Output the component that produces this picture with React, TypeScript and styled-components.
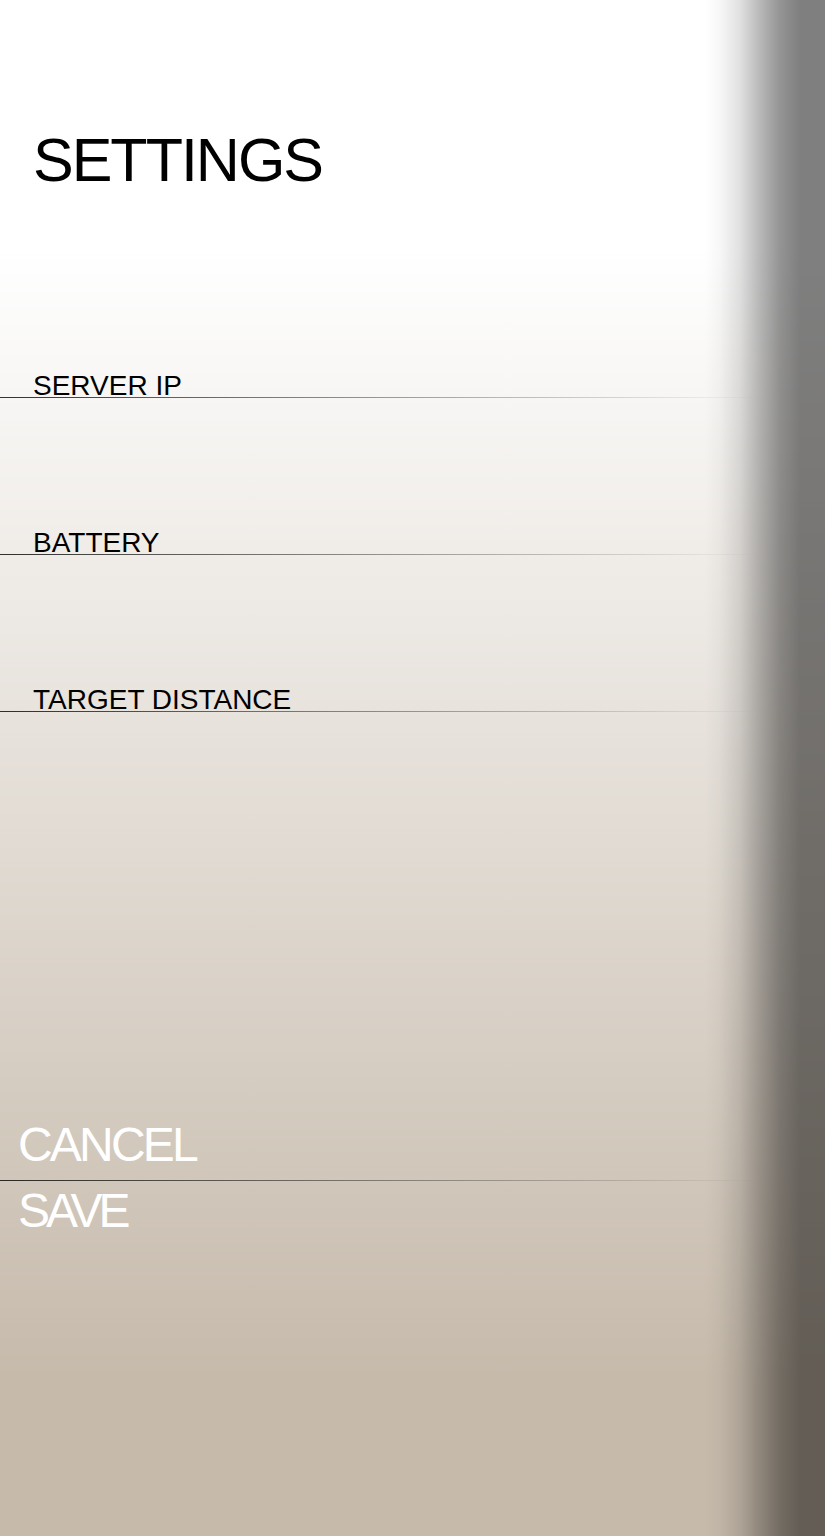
import React from "react";
import styled, { createGlobalStyle } from "styled-components";

const GlobalStyle = createGlobalStyle`
  html, body {
    margin: 0;
    padding: 0;
  }
  body {
    font-family: "Liberation Sans", Arial, Helvetica, sans-serif;
  }
`;

const Page = styled.div`
  position: relative;
  min-height: 1536px;
  overflow: hidden;
  background: linear-gradient(
    to bottom,
    #ffffff 0px,
    #ffffff 250px,
    #c6baab 1380px,
    #c6baab 1536px
  );
  display: flex;
  flex-direction: column;
`;

const Title = styled.h1`
  margin: 130px 0 0 33px;
  font-size: 61px;
  line-height: 61px;
  font-weight: 400;
  letter-spacing: -2px;
  color: #000;
`;

const Fields = styled.div`
  display: flex;
  flex-direction: column;
  gap: 134px;
  margin-top: 184px;
`;

const Field = styled.div`
  display: flex;
  flex-direction: column;
`;

const Label = styled.div`
  padding-left: 33px;
  font-size: 28px;
  line-height: 22px;
  height: 22px;
  letter-spacing: 0;
  color: #000;
  white-space: nowrap;
`;

const Rule = styled.div`
  height: 1px;
  width: 100%;
  background: linear-gradient(
    to right,
    rgba(0, 0, 0, 0.8) 0px,
    rgba(0, 0, 0, 0.26) 500px,
    rgba(0, 0, 0, 0) 760px
  );
`;

const Actions = styled.div`
  display: flex;
  flex-direction: column;
  margin-top: 403px;
`;

const ActionButton = styled.button<{ $tight?: boolean }>`
  appearance: none;
  border: none;
  background: transparent;
  text-align: left;
  padding: 0 0 ${(p) => (p.$tight ? "0" : "5px")} 18px;
  margin: 0;
  font-family: "Liberation Sans", Arial, Helvetica, sans-serif;
  font-size: 48px;
  line-height: 60px;
  height: ${(p) => (p.$tight ? "60px" : "65px")};
  font-weight: 400;
  letter-spacing: ${(p) => (p.$tight ? "-4px" : "-2.8px")};
  color: #ffffff;
  cursor: pointer;
`;

const EdgeShadow = styled.div`
  position: absolute;
  top: 0;
  right: 0;
  bottom: 0;
  width: 120px;
  pointer-events: none;
  background: linear-gradient(
    to right,
    rgba(0, 0, 0, 0) 0px,
    rgba(0, 0, 0, 0.03) 15px,
    rgba(0, 0, 0, 0.12) 35px,
    rgba(0, 0, 0, 0.28) 55px,
    rgba(0, 0, 0, 0.42) 75px,
    rgba(0, 0, 0, 0.5) 95px,
    rgba(0, 0, 0, 0.5) 120px
  );
`;

const fields = ["SERVER IP", "BATTERY", "TARGET DISTANCE"];

export default function App() {
  return (
    <>
      <GlobalStyle />
      <Page>
        <Title>SETTINGS</Title>
        <Fields>
          {fields.map((f) => (
            <Field key={f}>
              <Label>{f}</Label>
              <Rule />
            </Field>
          ))}
        </Fields>
        <Actions>
          <ActionButton>CANCEL</ActionButton>
          <Rule />
          <ActionButton $tight>SAVE</ActionButton>
        </Actions>
        <EdgeShadow />
      </Page>
    </>
  );
}
